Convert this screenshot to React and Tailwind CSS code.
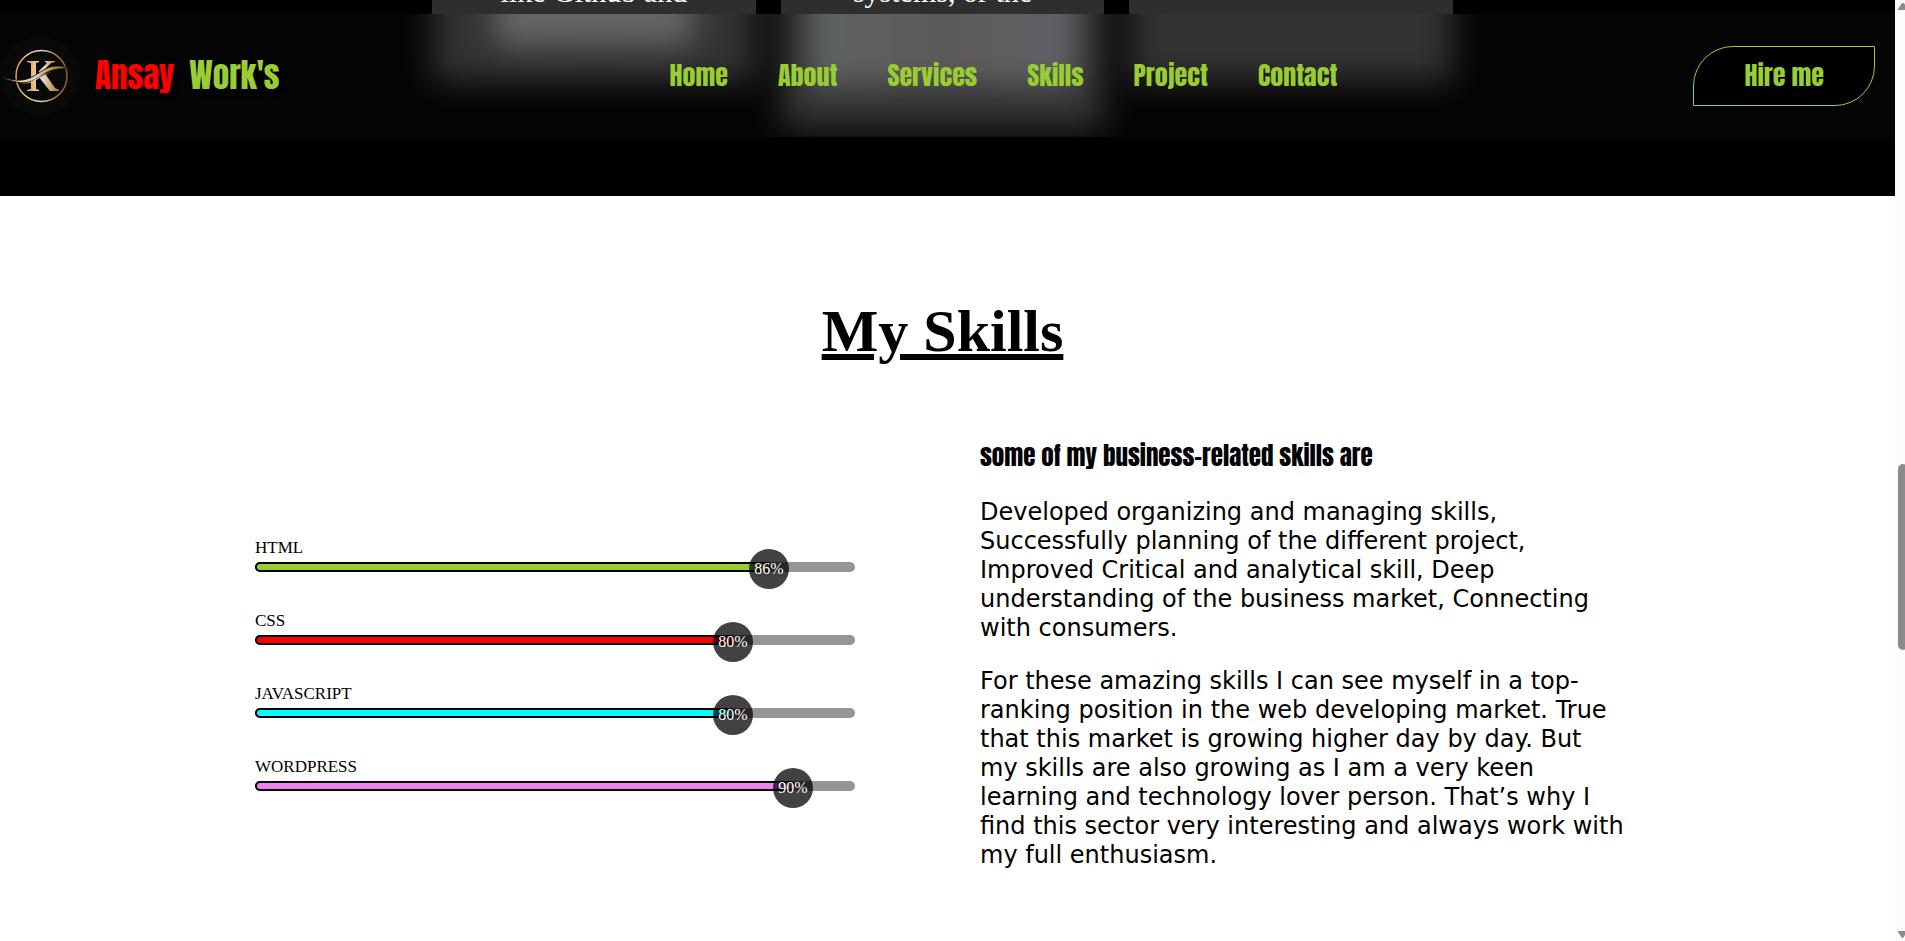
import React from "react";

const links = ["Home", "About", "Services", "Skills", "Project", "Contact"];

const skills = [
  { name: "HTML", value: 86, color: "bg-[#9acd32]" },
  { name: "CSS", value: 80, color: "bg-[#ff0000]" },
  { name: "JAVASCRIPT", value: 80, color: "bg-[#00ffff]" },
  { name: "WORDPRESS", value: 90, color: "bg-[#ee82ee]" },
];

const heavy = "font-['Impact','Anton','Roboto',sans-serif] font-normal";

function Logo() {
  return (
    <svg viewBox="0 0 80 80" className="size-20 shrink-0" role="img" aria-label="K monogram">
      <defs>
        <linearGradient id="gold" x1="0" y1="0" x2="1" y2="0">
          <stop offset="0" stopColor="#d9a441" />
          <stop offset="0.25" stopColor="#f3cf82" />
          <stop offset="0.5" stopColor="#d8d4cc" />
          <stop offset="0.75" stopColor="#b98a35" />
          <stop offset="1" stopColor="#8a6220" />
        </linearGradient>
        <linearGradient id="letter" gradientUnits="userSpaceOnUse" x1="27" y1="0" x2="60" y2="0">
          <stop offset="0" stopColor="#d9a04c" />
          <stop offset="0.25" stopColor="#f0c583" />
          <stop offset="0.5" stopColor="#d9d9d9" />
          <stop offset="0.75" stopColor="#c9a25a" />
          <stop offset="1" stopColor="#a9782c" />
        </linearGradient>
      </defs>
      <circle cx="40" cy="40" r="40" fill="#090909" />
      <circle cx="41.500" cy="40" r="25.500" fill="none" stroke="url(#gold)" strokeWidth="1.500" />
      <path d="M27 25h12v1l-3 1v26l3 1v1H27v-1l4-1V27l-4-1z" fill="url(#letter)" />
      <path d="M45 25h10v1l-4 1-12 12v-4l8-8-2-1z" fill="url(#letter)" />
      <path d="M38 40l6-4 11 16 4 2v1h-9z" fill="url(#letter)" />
      <path
        d="M2 40.500C12 45 24 46 34 40S48 30 57 30s9 2 13 3c-10-1-18 0-26 5S28 49 16 46 6 43 2 40.500z"
        fill="url(#gold)"
        stroke="#090909"
        strokeWidth="0.800"
      />
      <path d="M20 47c12 2 17-8 32-11-12 4-20 14-32 11z" fill="url(#gold)" />
    </svg>
  );
}

function HeaderGlow() {
  const card = "flex flex-1 flex-col items-center bg-[#2e2e2e]";
  return (
    <div aria-hidden="true" className="absolute inset-0 overflow-hidden pr-2.5">
      <div className="mx-auto -mt-20 flex max-w-[1021px] items-start gap-[25px] blur-[16px]">
        <div className={card + " h-[148px]"}>
          <div className="h-[112px] w-[200px] bg-linear-to-r from-[#606565] via-[#666260] to-[#5e6464]" />
        </div>
        <div className={card + " h-[196px]"}>
          <div className="h-[153px] w-[272px] bg-linear-to-r from-[#5c6262] via-[#5a5656] to-[#5c6066]" />
        </div>
        <div className={card + " h-[148px]"} />
      </div>
      <div className="absolute inset-0 bg-white/2" />
    </div>
  );
}

function Header() {
  return (
    <header className={"absolute inset-x-0 top-3.5 h-[123px] bg-black text-[#9acd32] " + heavy}>
      <HeaderGlow />
      <div className="relative flex h-full items-center justify-between pr-5">
        <a href="#home" className="flex items-center gap-[15px] pr-[34px] text-[33px]">
          <Logo />
          <span className="flex gap-[15px] [text-shadow:5px_5px_5px_#000]">
            <span className="text-[#ff0000]">Ansay</span>
            <span>Work's</span>
          </span>
        </a>
        <nav className="flex gap-[50px] text-[26px]">
          {links.map((link) => (
            <a key={link} href={"#" + link.toLowerCase()}>
              {link}
            </a>
          ))}
        </nav>
        <button className="h-[60px] rounded-tl-[40px] rounded-br-[40px] border border-[#9acd32] bg-black px-[50px] text-[26px]">
          Hire me
        </button>
      </div>
    </header>
  );
}

function ServiceCards() {
  const card = "h-[100px] flex-1 bg-[#2e2e2e]";
  return (
    <div className="mx-auto -mt-[22px] flex max-w-[1021px] gap-[25px] text-center font-['Liberation_Serif',serif] text-[30px] leading-7 text-white">
      <div className={card}>
        <p>like Github and</p>
      </div>
      <div className={card}>
        <p>systems, or the</p>
      </div>
      <div className={card} />
    </div>
  );
}

function SkillBar({ name, value, color }) {
  return (
    <li>
      <p className="text-[17px] leading-5">{name}</p>
      <div className="mt-1 h-2.5 rounded-[5px] bg-[#959595]">
        <div
          className={"relative h-full rounded-[5px] border-2 border-black " + color}
          style={{ width: value + "%" }}
        >
          <span className="absolute -top-[15px] -right-5 flex size-10 items-center justify-center rounded-full bg-black/74 text-base text-white">
            {value}%
          </span>
        </div>
      </div>
    </li>
  );
}

function Scrollbar() {
  return (
    <div aria-hidden="true" className="relative w-2.5 shrink-0 overflow-hidden bg-[#fcfcfc]">
      <svg viewBox="0 0 10 8" className="absolute top-[2px] left-0 h-2 w-2.5">
        <path d="M3 8V7l4-6h2l3 5v2z" fill="#8b8b8b" />
      </svg>
      <div className="absolute top-[49.300%] left-[3px] h-[186px] w-2.5 rounded-[5px] bg-[#8b8b89]" />
      <svg viewBox="0 0 10 8" className="absolute bottom-[3px] left-0 h-2 w-2.5">
        <path d="M3 1h9v1L8 8H7L3 2z" fill="#8b8b8b" />
      </svg>
    </div>
  );
}

export default function App() {
  return (
    <div className="flex min-h-screen bg-white text-black">
      <main className="relative min-w-0 flex-1">
        <section className="flow-root h-[196px] overflow-hidden bg-black pr-2.5">
          <ServiceCards />
        </section>
        <Header />
        <section id="skills" className="pt-[100px] pr-2.5 font-['Liberation_Serif',serif]">
          <h1 className="text-center text-[60px] leading-[70px] font-bold underline">My Skills</h1>
          <div className="mt-[72px] flex items-center gap-[125px] pl-[255px]">
            <ul className="flex w-[600px] flex-col gap-[39px] pt-5">
              {skills.map((skill) => (
                <SkillBar key={skill.name} {...skill} />
              ))}
            </ul>
            <div className="flex w-[651px] flex-col gap-6 font-['Verdana','DejaVu_Sans',sans-serif] text-2xl leading-[29px]">
              <h2 className={"text-[25px] leading-9 " + heavy}>some of my business-related skills are</h2>
              <p>
                Developed organizing and managing skills, Successfully planning of the different project, Improved
                Critical and analytical skill, Deep understanding of the business market, Connecting with consumers.
              </p>
              <p>
                For these amazing skills I can see myself in a top-ranking position in the web developing market. True
                that this market is growing higher day by day. But my&nbsp;skills are also growing as I am a very keen
                learning and technology lover person. That’s why I find this sector very interesting and always work
                with my full enthusiasm.
              </p>
            </div>
          </div>
        </section>
      </main>
      <Scrollbar />
    </div>
  );
}
